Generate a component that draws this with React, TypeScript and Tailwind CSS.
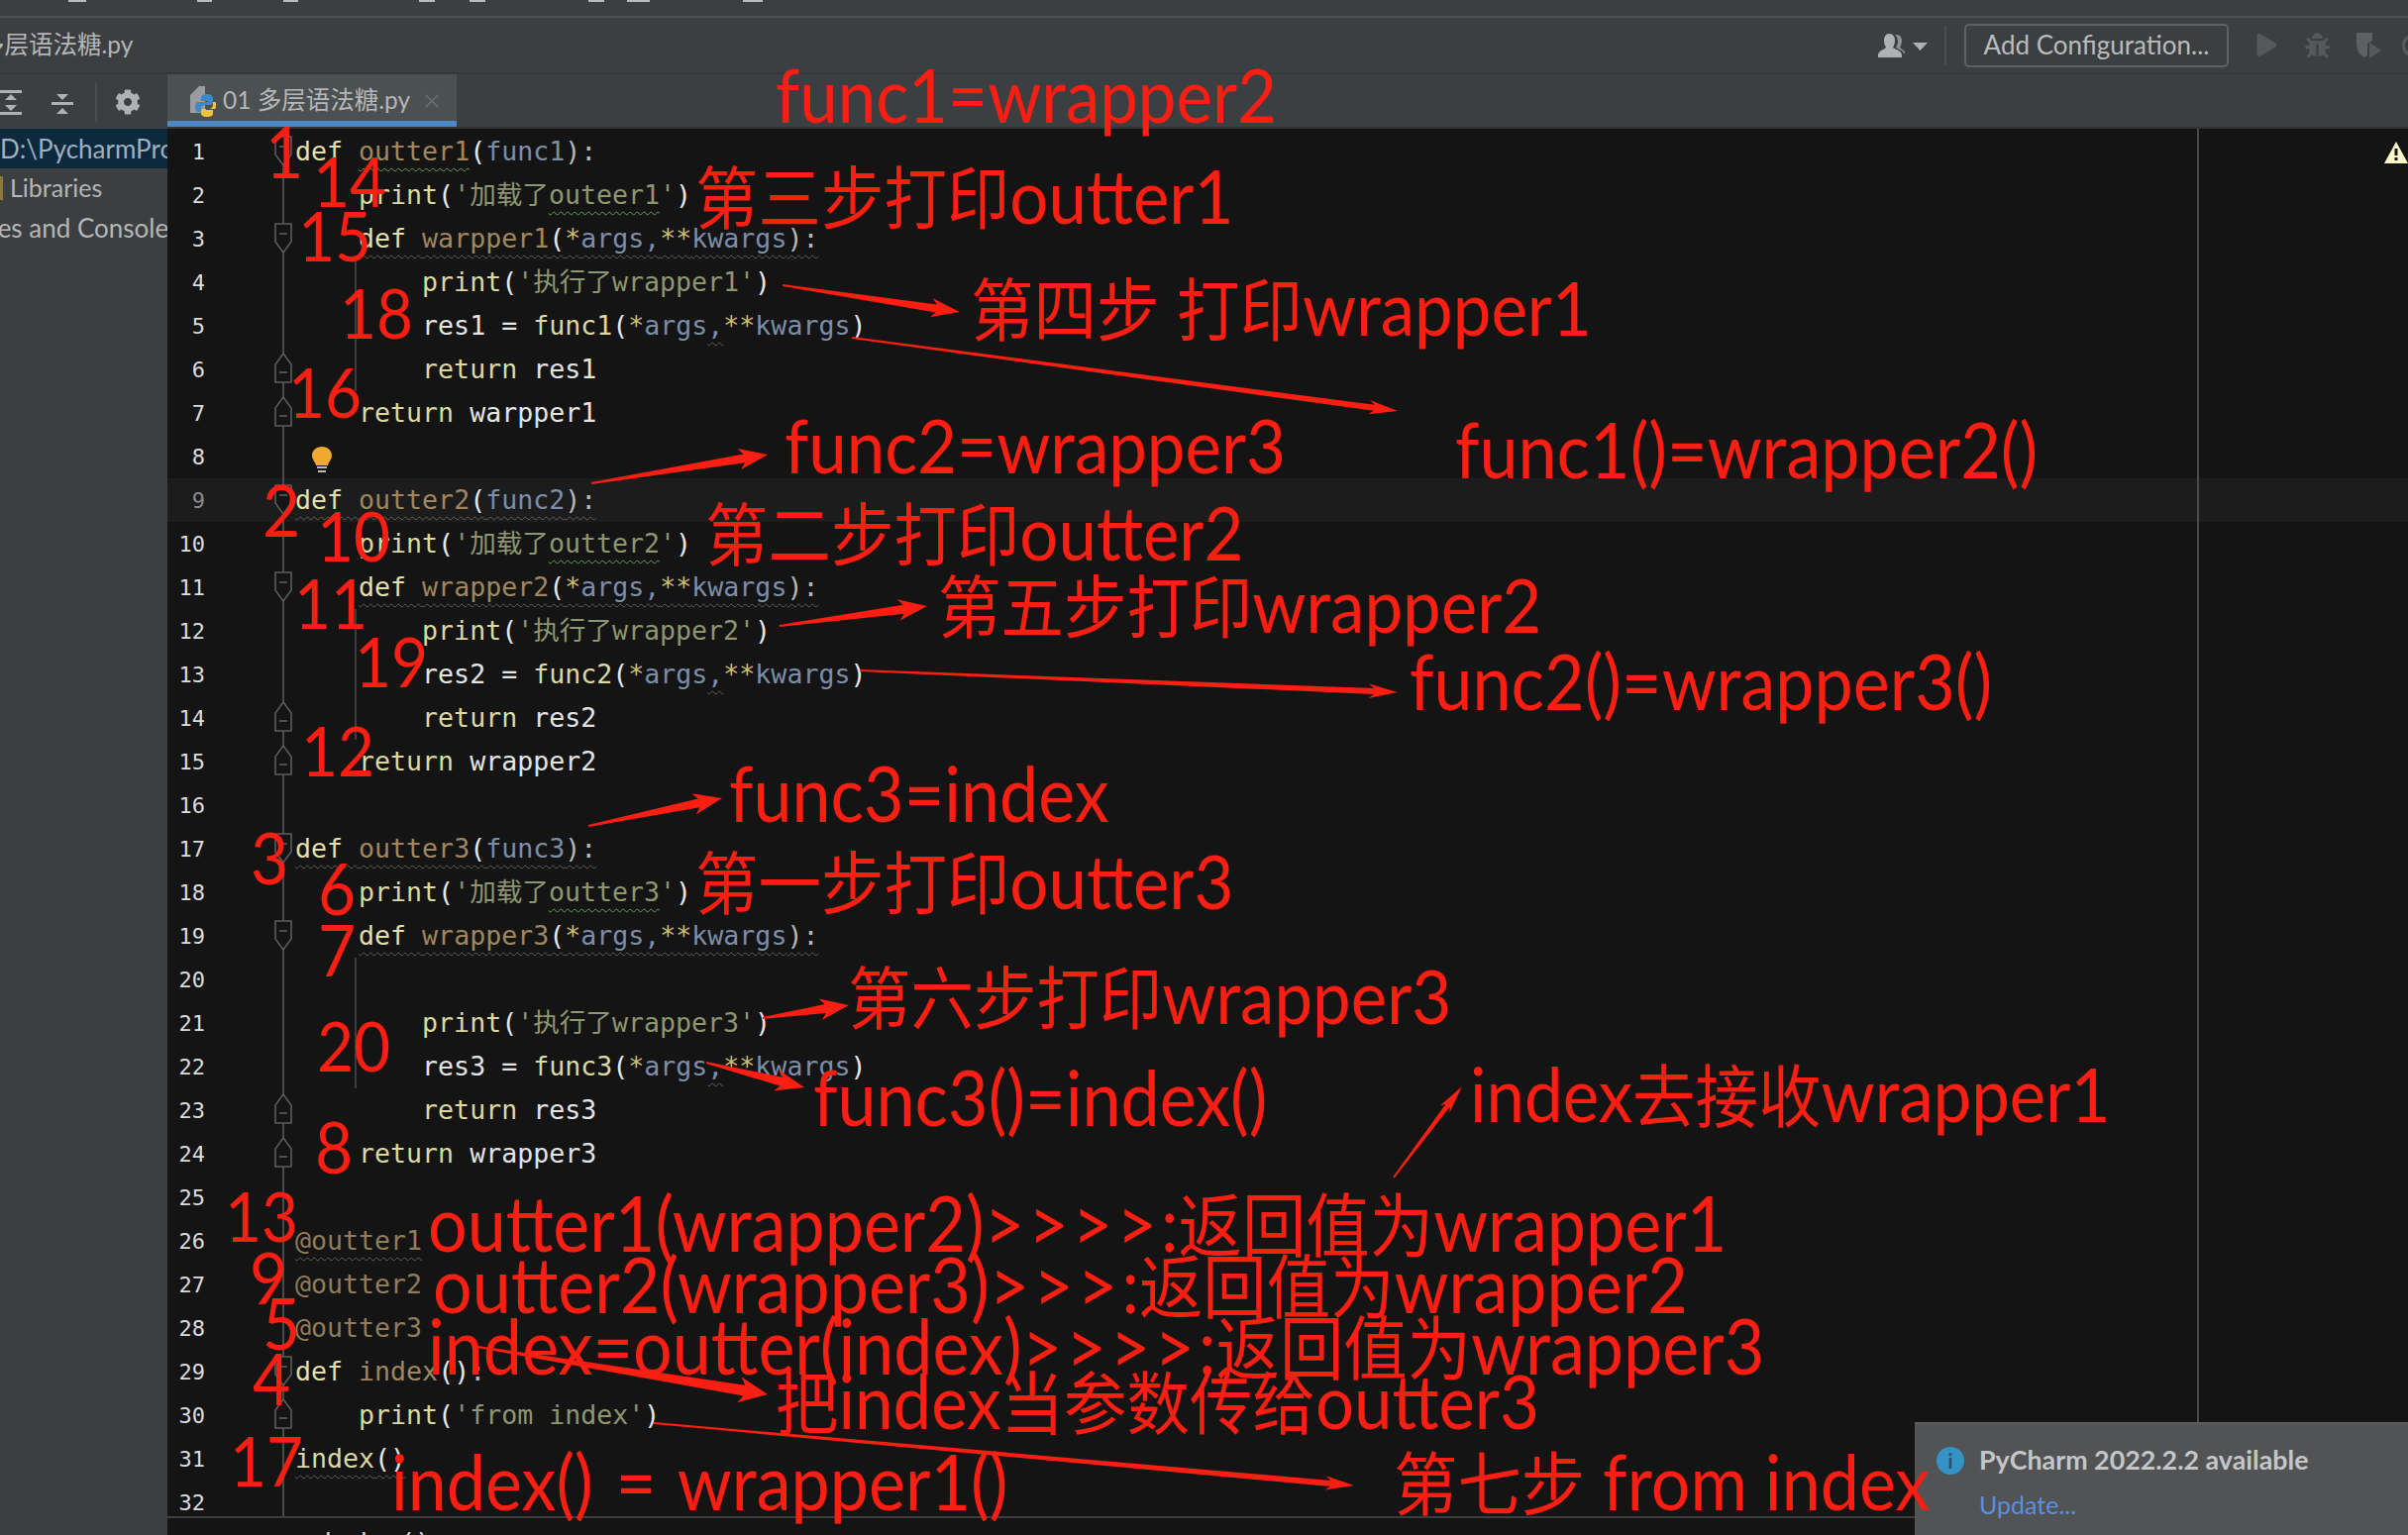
import React from "react";
import { FaCog, FaBug, FaPlay } from "react-icons/fa";

type Seg = [string, string?];
const KW = "text-[#e3dfa8]";
const FN = "text-[#a08660]";
const PA = "text-[#7d8da8]";
const BR = "text-[#e8e8e8]";
const ST = "text-[#8e9670]";
const PL = "text-[#e4e4e4]";
const PR = "text-[#dcd9a0]";
const SR = "text-[#d0bd75]";
const DE = "text-[#8f7c5c]";
const GW = "underline decoration-wavy decoration-[#5f5f55] decoration-1 underline-offset-[7px]";
const GR = "underline decoration-wavy decoration-[#6a9a5a] decoration-1 underline-offset-[7px]";

const defOuter = (n: string, p: string, green: boolean): Seg[] => [
  ["def", KW + (green ? "" : " " + GW)],
  [" ", green ? "" : GW],
  [n, FN + " " + (green ? GR : GW)],
  ["(", BR + (green ? "" : " " + GW)],
  [p, PA + (green ? "" : " " + GW)],
  ["):", "text-[#b8b8b0]" + (green ? "" : " " + GW)],
];
const defInner = (n: string): Seg[] => [
  ["    "],
  ["def", KW + " " + GW],
  [" ", GW],
  [n, FN + " " + GW],
  ["(", BR + " " + GW],
  ["*", SR + " " + GW],
  ["args,", PA + " " + GW],
  ["**", SR + " " + GW],
  ["kwargs", PA + " " + GW],
  ["):", "text-[#b8b8b0] " + GW],
];
const printLoad = (s: string): Seg[] => [
  ["    "],
  ["print", PR],
  ["(", BR],
  ["'加载了", ST],
  [s, ST + " " + GR],
  ["'", ST],
  [")", BR],
];
const printRun = (s: string): Seg[] => [
  ["        "],
  ["print", PR],
  ["(", BR],
  ["'执行了" + s + "'", ST],
  [")", BR],
];
const callRes = (r: string, f: string): Seg[] => [
  ["        "],
  [r + " = ", PL],
  [f, PR],
  ["(", BR],
  ["*", SR],
  ["args", PA],
  [",", PA + " " + GW],
  ["**", SR],
  ["kwargs", PA],
  [")", BR],
];
const ret = (indent: string, w: string): Seg[] => [[indent], ["return", PR], [" " + w, PL]];

const lines: Seg[][] = [
  defOuter("outter1", "func1", true),
  printLoad("outeer1"),
  defInner("warpper1"),
  printRun("wrapper1"),
  callRes("res1", "func1"),
  ret("        ", "res1"),
  ret("    ", "warpper1"),
  [],
  defOuter("outter2", "func2", false),
  printLoad("outter2"),
  defInner("wrapper2"),
  printRun("wrapper2"),
  callRes("res2", "func2"),
  ret("        ", "res2"),
  ret("    ", "wrapper2"),
  [],
  defOuter("outter3", "func3", false),
  printLoad("outter3"),
  defInner("wrapper3"),
  [],
  printRun("wrapper3"),
  callRes("res3", "func3"),
  ret("        ", "res3"),
  ret("    ", "wrapper3"),
  [],
  [["@outter1", DE + " " + GW]],
  [["@outter2", DE]],
  [["@outter3", DE]],
  [["def", KW], [" "], ["index", FN], ["()", BR], [":", "text-[#b8b8b0]"]],
  [["    "], ["print", PR], ["(", BR], ["'from index'", ST], [")", BR]],
  [["index", PR + " " + GW], ["()", BR + " " + GW]],
  [],
];

const foldStart = [1, 3, 9, 11, 17, 19, 29];
const foldEnd = [6, 7, 14, 15, 23, 24, 30];
const guide = [4, 5, 6, 12, 13, 14, 20, 21, 22];

function Fold({ end }: { end: boolean }) {
  return (
    <svg viewBox="0 0 20 34" className="absolute left-[-11px] top-[4px] w-[20px] h-[34px]">
      <path
        d={end ? "M2 31V13L10 2L18 13V31Z" : "M2 3V21L10 32L18 21V3Z"}
        fill="#141414"
        stroke="#5a5d5f"
        strokeWidth="1.6"
      />
      <path d={end ? "M6 21H14" : "M6 13H14"} stroke="#5a5d5f" strokeWidth="1.6" />
    </svg>
  );
}

const annotations: [string, string][] = [
  ["1", "left-[268px] top-[119px] text-[66px]"],
  ["14", "left-[316px] top-[151px] text-[64px]"],
  ["15", "left-[301px] top-[206px] text-[64px]"],
  ["18", "left-[343px] top-[284px] text-[64px]"],
  ["16", "left-[291px] top-[364px] text-[64px]"],
  ["2", "left-[265px] top-[481px] text-[66px]"],
  ["10", "left-[320px] top-[509px] text-[64px]"],
  ["11", "left-[297px] top-[577px] text-[64px]"],
  ["19", "left-[358px] top-[636px] text-[64px]"],
  ["12", "left-[304px] top-[726px] text-[64px]"],
  ["3", "left-[253px] top-[832px] text-[66px]"],
  ["6", "left-[321px] top-[863px] text-[66px]"],
  ["7", "left-[321px] top-[925px] text-[66px]"],
  ["20", "left-[320px] top-[1024px] text-[64px]"],
  ["8", "left-[318px] top-[1125px] text-[66px]"],
  ["13", "left-[227px] top-[1196px] text-[64px]"],
  ["9", "left-[252px] top-[1257px] text-[66px]"],
  ["5", "left-[265px] top-[1303px] text-[66px]"],
  ["4", "left-[255px] top-[1359px] text-[66px]"],
  ["17", "left-[232px] top-[1443px] text-[64px]"],
  ["func1=wrapper2", "left-[783px] top-[60px] text-[69px]"],
  ["第三步打印outter1", "left-[702px] top-[162px] text-[69px]"],
  ["第四步 打印wrapper1", "left-[980px] top-[275px] text-[69px]"],
  ["func1()=wrapper2()", "left-[1469px] top-[418px] text-[70px]"],
  ["func2=wrapper3", "left-[792px] top-[414px] text-[69px]"],
  ["第二步打印outter2", "left-[712px] top-[502px] text-[69px]"],
  ["第五步打印wrapper2", "left-[947px] top-[575px] text-[69px]"],
  ["func2()=wrapper3()", "left-[1423px] top-[652px] text-[70px]"],
  ["func3=index", "left-[736px] top-[765px] text-[70px]"],
  ["第一步打印outter3", "left-[702px] top-[854px] text-[69px]"],
  ["第六步打印wrapper3", "left-[856px] top-[970px] text-[69px]"],
  ["func3()=index()", "left-[821px] top-[1072px] text-[70px]"],
  ["index去接收wrapper1", "left-[1484px] top-[1069px] text-[69px]"],
  ["outter1(wrapper2)>>>>:返回值为wrapper1", "left-[432px] top-[1199px] text-[70px]"],
  ["outter2(wrapper3)>>>:返回值为wrapper2", "left-[437px] top-[1261px] text-[70px]"],
  ["index=outter(index)>>>>:返回值为wrapper3", "left-[432px] top-[1323px] text-[70px]"],
  ["把index当参数传给outter3", "left-[783px] top-[1379px] text-[69px]"],
  ["index() = wrapper1()", "left-[395px] top-[1460px] text-[70px] [word-spacing:5px]"],
  ["第七步 from index", "left-[1407px] top-[1460px] text-[70px]"],
];

function Mixed({ text }: { text: string }) {
  const parts = text.match(/[\u4e00-\u9fff]+|>+|[^\u4e00-\u9fff>]+/g) ?? [];
  return (
    <>
      {parts.map((p, i) => {
        const cjk = /[\u4e00-\u9fff]/.test(p);
        const gt = p[0] === ">";
        return (
          <span key={i} className={cjk ? "text-[0.92em]" : gt ? "tracking-[4px]" : ""}>
            {p}
          </span>
        );
      })}
    </>
  );
}

const arrows: [number, number, number, number, number][] = [
  [790, 288, 969, 315, 8],
  [860, 341, 1411, 415, 6],
  [597, 488, 775, 459, 9],
  [787, 632, 936, 612, 9],
  [868, 677, 1411, 699, 6],
  [594, 834, 729, 806, 9],
  [770, 1028, 857, 1015, 9],
  [713, 1073, 812, 1098, 9],
  [1407, 1189, 1476, 1097, 5],
  [482, 1360, 775, 1408, 11],
  [660, 1437, 1367, 1500, 6],
];

function arrowPoints(x1: number, y1: number, x2: number, y2: number, w: number) {
  const dx = x2 - x1;
  const dy = y2 - y1;
  const len = Math.hypot(dx, dy);
  const ux = dx / len;
  const uy = dy / len;
  const nx = -uy;
  const ny = ux;
  const hl = 24;
  const bx = x2 - ux * hl;
  const by = y2 - uy * hl;
  const p = (x: number, y: number) => `${x.toFixed(1)},${y.toFixed(1)}`;
  return [
    p(x1 + nx, y1 + ny),
    p(bx + (nx * w) / 2, by + (ny * w) / 2),
    p(bx - ux * 5 + nx * w * 1.2, by - uy * 5 + ny * w * 1.2),
    p(x2, y2),
    p(bx - ux * 5 - nx * w * 1.2, by - uy * 5 - ny * w * 1.2),
    p(bx - (nx * w) / 2, by - (ny * w) / 2),
    p(x1 - nx, y1 - ny),
  ].join(" ");
}

const UI = "font-['Lato','Noto_Sans_CJK_SC',sans-serif]";
const MONO = "font-['DejaVu_Sans_Mono','Noto_Sans_CJK_SC',monospace]";

export default function App() {
  return (
    <div className={`relative w-[2431px] h-[1550px] overflow-hidden flex flex-col bg-[#3c3f41] ${UI}`}>
      {/* clipped main menu */}
      <div className="h-[18px] shrink-0 border-b-2 border-[#4d5052]">
        <svg width="800" height="4" className="block">
          {[[69, 18], [199, 15], [286, 15], [423, 16], [474, 16], [594, 16], [633, 23], [750, 20]].map(([x, w]) => (
            <rect key={x} x={x} y="0" width={w} height="2" fill="#b8babb" />
          ))}
        </svg>
      </div>

      {/* navigation bar */}
      <div className="h-[57px] shrink-0 flex items-center border-b-2 border-[#36393b] pl-[2px] pr-0">
        <span className="text-[24.5px] text-[#b4b6b8] -ml-[22px] whitespace-nowrap">多层语法糖.py</span>
        <div className="flex-1" />
        <svg viewBox="0 0 50 26" className="w-[50px] h-[26px] mr-[17px] shrink-0">
          <path d="M11 1c4 0 6 3 6 7 0 3-1 5-2 7 3 2 8 3 9 7v3H0v-3c1-4 6-5 8-7-1-2-2-4-2-7 0-4 2-7 5-7z" fill="#afb1b3" />
          <path d="M19 2c3 0 5 3 5 6 0 3-1 5-2 7l5 4v2h-1c-1-3-5-4-8-6 1-2 2-4 2-6 0-3-1-5-3-7 1 0 1 0 2 0z" fill="#8f9193" />
          <path d="M35 10h15l-7.500 8z" fill="#afb1b3" />
        </svg>
        <div className="w-[2px] h-[40px] bg-[#4a4d4f] mr-[18px] shrink-0" />
        <div className="w-[267px] h-[44px] shrink-0 rounded-[5px] border-2 border-[#5e6164] flex items-center justify-center text-[26px] text-[#b9bbbd]">
          Add Configuration...
        </div>
        <FaPlay className="ml-[28px] w-[21px] h-[23px] text-[#56595b] shrink-0" />
        <FaBug className="ml-[28px] w-[25px] h-[26px] text-[#56595b] shrink-0" />
        <svg viewBox="0 0 28 30" className="ml-[25px] w-[28px] h-[30px] shrink-0">
          <path d="M2 2h16v8l-5 3v12l-3 2C5 24 2 20 2 12z" fill="#5e6163" />
          <path d="M15 12l12 8-12 8z" fill="#56595b" />
        </svg>
        <div className="ml-[20px] -mr-[18px] w-[24px] h-[24px] rounded-full border-[3px] border-[#56595b] shrink-0" />
      </div>

      <div className="flex-1 flex min-h-0">
        {/* project panel */}
        <div className="w-[169px] shrink-0 flex flex-col overflow-hidden bg-[#3c3f41]">
          <div className="h-[55px] shrink-0 flex items-center">
            <svg viewBox="0 0 24 30" className="w-[24px] h-[30px] shrink-0">
              <path d="M0 3H22V6H0ZM0 25H22V28H0Z" fill="#afb1b3" />
              <path d="M11 7l6 6H5zM5 18h12l-6 6z" fill="#afb1b3" />
            </svg>
            <svg viewBox="0 0 26 30" className="w-[26px] h-[30px] ml-[26px] shrink-0">
              <path d="M13 13l6-6H7zM2 15H24V18H2ZM7 27h12l-6-6z" fill="#afb1b3" />
            </svg>
            <div className="w-[2px] h-[40px] bg-[#4a4d4f] ml-[20px] shrink-0" />
            <FaCog className="w-[26px] h-[26px] ml-[18px] text-[#afb1b3] shrink-0" />
          </div>
          <div className="h-[40px] shrink-0 bg-[#0d293e] flex items-center whitespace-nowrap text-[26px] text-[#9fb0bf]">
            D:\PycharmProjects
          </div>
          <div className="h-[40px] shrink-0 flex items-center whitespace-nowrap text-[25px] text-[#b4b6b8]">
            <span className="w-[3px] h-[24px] bg-[#8a7a40] mr-[7px] shrink-0" />
            Libraries
          </div>
          <div className="h-[40px] shrink-0 flex items-center whitespace-nowrap text-[26px] text-[#b4b6b8] -ml-[87px]">
            Scratches and Consoles
          </div>
        </div>

        {/* editor */}
        <div className="flex-1 min-w-0 flex flex-col bg-[#141414] relative">
          <div className="h-[55px] shrink-0 flex border-b-2 border-[#323537] bg-[#3c3f41]">
            <div className="w-[292px] h-full bg-[#4b5052] border-b-[6px] border-[#4a88c7] flex items-center pl-[21px] pt-[6px] text-[24.5px] text-[#b4b6b8]">
              <svg viewBox="0 0 28 32" className="w-[28px] h-[32px] shrink-0">
                <path d="M2 10L11 1H17V28H2Z" fill="#9a9d9f" />
                <path d="M19 9c-4 0-6 1-6 4v3h7v1h-9c-3 0-4 2-4 5s1 5 4 5h2v-3c0-2 2-4 4-4h5c2 0 3-1 3-3v-4c0-2-2-4-6-4z" fill="#3f87c5" />
                <path d="M19 32c4 0 6-1 6-4v-3h-7v-1h9c1 0 1-2 1-4s0-3-1-3h-2v3c0 2-2 4-4 4h-5c-2 0-3 1-3 3v1c0 3 2 4 6 4z" fill="#f0c33c" />
              </svg>
              <span className="ml-[7px] whitespace-nowrap">01 多层语法糖.py</span>
              <svg viewBox="0 0 18 18" className="ml-[14px] w-[16px] h-[16px] shrink-0">
                <path d="M2 2L16 16M16 2L2 16" stroke="#696c6e" strokeWidth="2" />
              </svg>
            </div>
          </div>

          <div className="h-[1403px] shrink-0 pt-[1px] overflow-hidden relative border-b-2 border-[#3b3d3f]">
            {lines.map((segs, i) => {
              const n = i + 1;
              const current = n === 9;
              return (
                <div key={n} className={`h-[44px] flex items-center ${current ? "bg-[#1c1c1c]" : ""}`}>
                  <div className={`w-[38px] shrink-0 text-right text-[22px] ${MONO} ${current ? "text-[#8a8a8a]" : "text-[#dcdcdc]"}`}>
                    {n}
                  </div>
                  <div className="w-[78px] h-full shrink-0" />
                  <div className="relative w-[13px] h-full shrink-0 border-l-2 border-[#4a4a4a]">
                    {foldStart.includes(n) && <Fold end={false} />}
                    {foldEnd.includes(n) && <Fold end={true} />}
                  </div>
                  <div className={`relative flex-1 h-full flex items-center whitespace-pre text-[26.6px] ${MONO}`}>
                    {guide.includes(n) && <div className="absolute left-[60px] inset-y-0 w-[2px] bg-[#3c3c3c]" />}
                    {segs.map((s, j) => (
                      <span key={j} className={s[1] ?? ""}>
                        {s[0]}
                      </span>
                    ))}
                  </div>
                </div>
              );
            })}
            {/* right margin */}
            <div className="absolute left-[2049px] top-0 bottom-0 w-[2px] bg-[#4a4a4a]" />
            {/* intention bulb */}
            <svg viewBox="0 0 22 28" className="absolute left-[145px] top-[321px] w-[22px] h-[28px]">
              <path d="M11 0C5 0 1 4 1 9c0 4 3 6 4 10h12c1-4 4-6 4-10 0-5-4-9-10-9z" fill="#efa92f" />
              <path d="M6 21H16M7 25H15" stroke="#b9b9b9" strokeWidth="2" />
            </svg>
            {/* inspection */}
            <svg viewBox="0 0 24 22" className="absolute left-[2238px] top-[13px] w-[24px] h-[22px]">
              <path d="M12 0L24 22H0Z" fill="#f7f7c8" />
              <path d="M10.500 7H13.500V14H10.500ZM10.500 16H13.500V19H10.500Z" fill="#141414" />
            </svg>
          </div>
          <div className={`flex-1 overflow-hidden pl-[154px] pt-[12px] text-[26.6px] leading-none text-[#d8d8d8] ${MONO}`}>
            <span className="whitespace-pre">index()</span>
          </div>
        </div>
      </div>

      {/* update notification */}
      <div className="absolute left-[1933px] right-0 top-[1436px] bottom-0 bg-[#515355] border-t-2 border-[#5c5e60] flex">
        <div className="w-[28px] h-[28px] rounded-full bg-[#3592c4] ml-[22px] mt-[23px] flex items-center justify-center text-[20px] font-bold text-[#28506a] shrink-0">
          i
        </div>
        <div className="ml-[15px] mt-[20px] flex flex-col gap-[14px]">
          <span className="text-[26.8px] leading-[32px] font-bold text-[#c4c6c8] whitespace-nowrap">PyCharm 2022.2.2 available</span>
          <span className="text-[25px] leading-[30px] text-[#5c8fe0]">Update...</span>
        </div>
      </div>

      {/* red hand-drawn arrows */}
      <svg viewBox="0 0 2431 1550" className="absolute inset-0 w-[2431px] h-[1550px] pointer-events-none">
        {arrows.map(([a, b, c, d, w], i) => (
          <polygon key={i} points={arrowPoints(a, b, c, d, w)} fill="#fb1e12" />
        ))}
      </svg>

      {/* red annotations */}
      {annotations.map(([t, cls]) => (
        <div key={t} className={`absolute leading-none whitespace-pre text-[#fb1e12] scale-y-[1.1] ${cls}`}>
          <Mixed text={t} />
        </div>
      ))}
    </div>
  );
}
